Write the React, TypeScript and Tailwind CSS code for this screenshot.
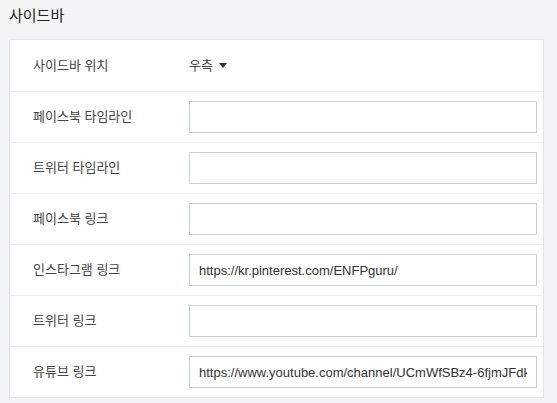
import React from 'react';

const rows: { label: string; value?: string; select?: boolean }[] = [
  { label: '사이드바 위치', select: true },
  { label: '페이스북 타임라인', value: '' },
  { label: '트위터 타임라인', value: '' },
  { label: '페이스북 링크', value: '' },
  { label: '인스타그램 링크', value: 'https://kr.pinterest.com/ENFPguru/' },
  { label: '트위터 링크', value: '' },
  { label: '유튜브 링크', value: 'https://www.youtube.com/channel/UCmWfSBz4-6fjmJFdkQp2wXg' },
];

export default function App() {
  return (
    <div
      className="h-[403px] w-[557px] overflow-hidden bg-[#f3f4f6] pl-[9px] pt-[6px]"
      style={{ fontFamily: '"Liberation Sans", "Noto Sans CJK KR", sans-serif' }}
    >
      <h2 className="text-[15px] leading-[20px] text-[#222]">사이드바</h2>
      <div className="mt-[13px] w-[535px] border border-[#e2e5e9] bg-white">
        {rows.map((row, i) => (
          <div
            key={row.label}
            className={
              'box-border flex h-[51px] items-center ' + (i > 0 ? 'border-t border-[#eef0f2]' : '')
            }
          >
            <div className="w-[179px] shrink-0 pl-[23px] text-[13px] text-[#444]">{row.label}</div>
            {row.select ? (
              <div className="flex items-center gap-[6px] text-[13px] text-[#444]">
                <span>우측</span>
                <svg width="8" height="5" viewBox="0 0 8 5">
                  <path d="M0 0h8L4 5z" fill="#333" />
                </svg>
              </div>
            ) : (
              <input
                type="text"
                defaultValue={row.value}
                className="h-[32px] w-[348px] border border-[#c8d0d9] bg-white px-[9px] text-[13px] text-[#333] outline-none"
              />
            )}
          </div>
        ))}
      </div>
    </div>
  );
}
